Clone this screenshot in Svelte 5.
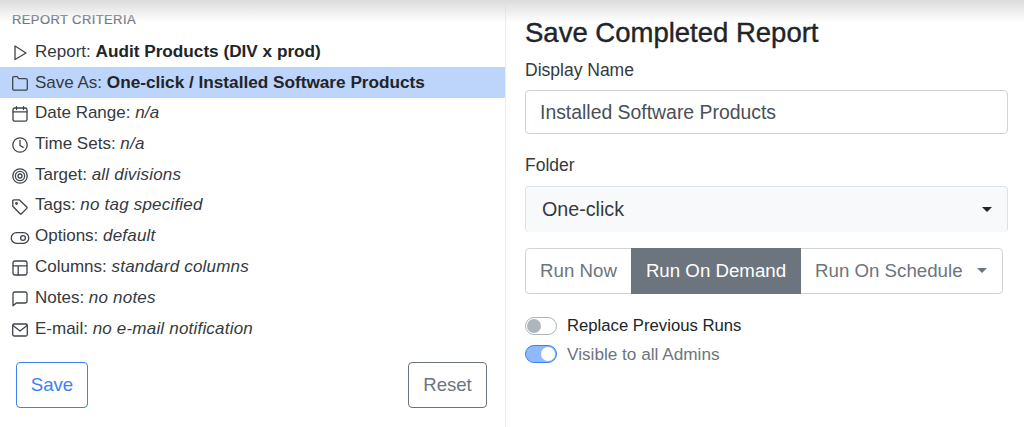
<script>
	const rows = [
		{ label: 'Report', value: 'Audit Products (DIV x prod)', strong: true, icon: 'play' },
		{ label: 'Save As', value: 'One-click / Installed Software Products', strong: true, icon: 'folder', active: true },
		{ label: 'Date Range', value: 'n/a', icon: 'calendar' },
		{ label: 'Time Sets', value: 'n/a', icon: 'clock' },
		{ label: 'Target', value: 'all divisions', icon: 'target' },
		{ label: 'Tags', value: 'no tag specified', icon: 'tag' },
		{ label: 'Options', value: 'default', icon: 'toggle' },
		{ label: 'Columns', value: 'standard columns', icon: 'columns' },
		{ label: 'Notes', value: 'no notes', icon: 'note' },
		{ label: 'E-mail', value: 'no e-mail notification', icon: 'mail' }
	];
</script>

<div class="page">
	<section class="criteria">
		<h6>REPORT CRITERIA</h6>
		<ul>
			{#each rows as row}
				<li class:active={row.active}>
					<svg viewBox="0 0 16 16" width="16" height="16" fill="none" stroke="currentColor" stroke-width="1.3" stroke-linejoin="round" stroke-linecap="round">
						{#if row.icon === 'play'}
							<path d="M3 1v13.500L14 8z" />
						{:else if row.icon === 'folder'}
							<path d="M.7 3V1.900A1.200 1.200 0 0 1 1.900.7h3.300L6.800 2.600h6.900a1.600 1.600 0 0 1 1.600 1.600v8.600a1.400 1.400 0 0 1-1.400 1.400H2.100A1.400 1.400 0 0 1 .7 12.800z" />
						{:else if row.icon === 'calendar'}
							<rect x="1" y="2" width="14" height="13.200" rx="1.800" />
							<path d="M1 5.800h14M4.500.6v2.900M11.500.6v2.900" />
						{:else if row.icon === 'clock'}
							<circle cx="8" cy="8" r="7.200" />
							<path d="M8 3.500v5l3.200 1.900" />
						{:else if row.icon === 'target'}
							<circle cx="8" cy="8" r="7.200" />
							<circle cx="8" cy="8" r="4.600" />
							<circle cx="8" cy="8" r="2" />
						{:else if row.icon === 'tag'}
							<path d="M.8 1.900A1.100 1.100 0 0 1 1.900.8h5.300l7.600 7.200a1 1 0 0 1 0 1.400l-5.400 5.300a1 1 0 0 1-1.400 0L.8 7.200z" />
							<circle cx="4.500" cy="4.500" r="0.800" />
						{:else if row.icon === 'toggle'}
							<rect x="-0.800" y="2.700" width="17.600" height="10.600" rx="5.300" />
							<circle cx="11" cy="8" r="2.400" />
						{:else if row.icon === 'columns'}
							<rect x="1" y="1" width="14" height="14" rx="1.800" />
							<path d="M1 5.800h14M6.200 5.800V15" />
						{:else if row.icon === 'note'}
							<path d="M1 14.800V2.800A1.800 1.800 0 0 1 2.800 1h10.400A1.800 1.800 0 0 1 15 2.800v7.400a1.800 1.800 0 0 1-1.800 1.800H4.300z" />
						{:else if row.icon === 'mail'}
							<rect x=".7" y="2" width="14.600" height="12" rx="1.500" />
							<path d="M1 3.500l7 5.500 7-5.500" />
						{/if}
					</svg>
					<span>{row.label}: {#if row.strong}<b>{row.value}</b>{:else}<i>{row.value}</i>{/if}</span>
				</li>
			{/each}
		</ul>
		<div class="actions">
			<button class="save">Save</button>
			<button class="reset">Reset</button>
		</div>
	</section>

	<section class="form">
		<h2>Save Completed Report</h2>
		<label for="name">Display Name</label>
		<input id="name" type="text" value="Installed Software Products" />
		<label class="folder-label" for="folder">Folder</label>
		<div id="folder" class="select">
			<span>One-click</span>
			<span class="caret"></span>
		</div>
		<div class="group">
			<span class="run-now">Run Now</span>
			<span class="run-demand">Run On Demand</span>
			<span class="run-schedule">Run On Schedule<span class="caret small"></span></span>
		</div>
		<div class="switch first">
			<span class="track"><span class="knob"></span></span>
			<span>Replace Previous Runs</span>
		</div>
		<div class="switch on">
			<span class="track"><span class="knob"></span></span>
			<span>Visible to all Admins</span>
		</div>
	</section>
	<div class="top-shade"></div>
</div>

<style>
	:global(body) {
		margin: 0;
		background: #fff;
	}

	.page {
		position: relative;
		display: flex;
		width: 1024px;
		height: 427px;
		overflow: hidden;
		font-family: 'Liberation Sans', Arial, sans-serif;
		font-size: 17px;
		color: #212529;
	}

	.top-shade {
		position: absolute;
		top: 0;
		left: 0;
		right: 0;
		height: 22px;
		background: linear-gradient(#dcdcdc, rgba(255, 255, 255, 0));
		pointer-events: none;
	}

	.criteria {
		display: flex;
		flex-direction: column;
		width: 506px;
		box-sizing: border-box;
		border-right: 1px solid #ececec;
	}

	h6 {
		margin: 12px 0 0 12px;
		font-size: 13px;
		line-height: 15px;
		font-weight: 400;
		letter-spacing: 0.4px;
		color: #6c757d;
		-webkit-text-stroke: 0.2px #6c757d;
	}

	ul {
		list-style: none;
		margin: 9px 0 0;
		padding: 0;
	}

	li {
		display: flex;
		align-items: center;
		gap: 7px;
		height: 30.800px;
		padding-left: 12px;
		color: #343a40;
	}

	li svg {
		flex: none;
		margin-top: 3px;
		overflow: visible;
		color: #3f454b;
	}

	li.active {
		background: #bdd4fb;
	}

	li b {
		font-size: 17.200px;
		color: #212529;
	}

	li i {
		letter-spacing: 0.2px;
	}

	.actions {
		display: flex;
		justify-content: space-between;
		margin: 18px 18px 0 16px;
	}

	button {
		height: 46px;
		font: inherit;
		font-size: 18.600px;
		background: #fff;
		border-radius: 4px;
	}

	.save {
		width: 72px;
		border: 1px solid #3b82f6;
		color: #3b82f6;
	}

	.reset {
		width: 79px;
		border: 1px solid #6c757d;
		color: #6c757d;
	}

	.form {
		flex: 1;
		display: flex;
		flex-direction: column;
		padding: 0 16px 0 19px;
	}

	h2 {
		margin: 18px 0 0;
		font-size: 27.500px;
		line-height: 30px;
		font-weight: 400;
		color: #212529;
		-webkit-text-stroke: 0.4px #212529;
	}

	label {
		margin-top: 12px;
		font-size: 17.500px;
		line-height: 20px;
		color: #343a40;
	}

	input {
		margin-top: 10px;
		height: 44px;
		box-sizing: border-box;
		padding: 0 14px;
		font: inherit;
		font-size: 19.400px;
		color: #495057;
		border: 1px solid #ced4da;
		border-radius: 4px;
	}

	.folder-label {
		margin-top: 21px;
	}

	.select {
		display: flex;
		justify-content: space-between;
		align-items: center;
		margin-top: 11px;
		height: 46px;
		box-sizing: border-box;
		padding: 0 15px 0 16px;
		font-size: 19.700px;
		color: #343a40;
		background: #f8f9fa;
		border: 1px solid #dee2e6;
		border-bottom: 0;
		border-radius: 4px;
	}

	.caret {
		width: 0;
		height: 0;
		border-left: 5.500px solid transparent;
		border-right: 5.500px solid transparent;
		border-top: 5.500px solid #212529;
	}

	.caret.small {
		display: inline-block;
		margin-left: 14px;
		vertical-align: 4.500px;
		border-top-color: #6c757d;
	}

	.group {
		display: flex;
		margin: 16px 5px 0 0;
		height: 46px;
		box-sizing: border-box;
		font-size: 18.700px;
		line-height: 44px;
		color: #6c757d;
		border: 1px solid #ced4da;
		border-radius: 4px;
	}

	.run-now {
		width: 105px;
		text-align: center;
	}

	.run-demand {
		width: 170px;
		margin: -1px 0;
		line-height: 46px;
		text-align: center;
		color: #fff;
		background: #6c757d;
	}

	.run-schedule {
		flex: 1;
		padding-left: 14px;
		white-space: nowrap;
	}

	.switch {
		display: flex;
		align-items: center;
		gap: 10px;
		height: 28px;
		font-size: 16.700px;
		color: #212529;
	}

	.switch.first {
		margin-top: 18px;
	}

	.switch.on {
		font-size: 17.200px;
		color: #6c757d;
	}

	.track {
		display: flex;
		align-items: center;
		width: 32px;
		height: 18px;
		box-sizing: border-box;
		padding: 0 1px;
		border: 1px solid #adb5bd;
		border-radius: 9px;
	}

	.knob {
		width: 14px;
		height: 14px;
		border-radius: 50%;
		background: #adb5bd;
	}

	.on .track {
		justify-content: flex-end;
		background: #8fb9fb;
		border-color: #3b82f6;
	}

	.on .knob {
		background: #fff;
	}
</style>
